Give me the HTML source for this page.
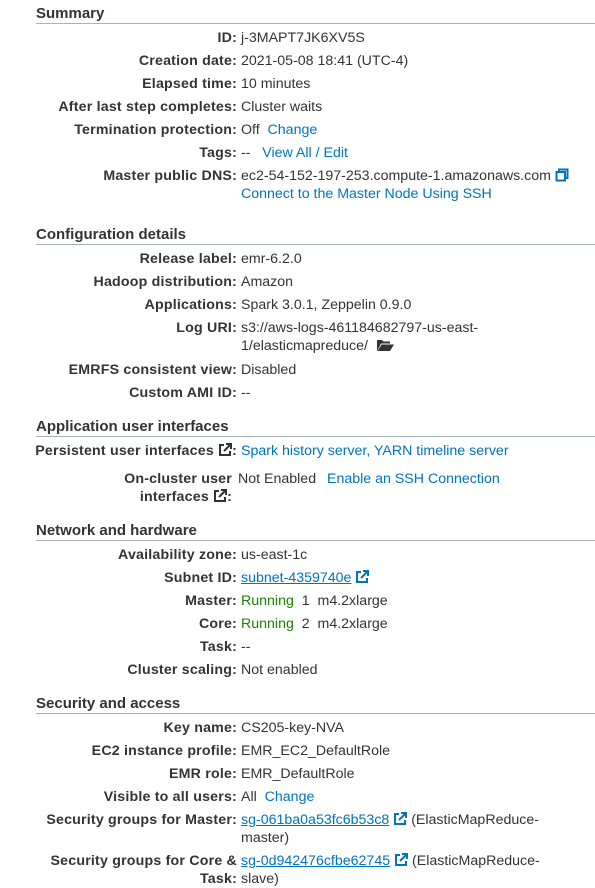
<!DOCTYPE html>
<html><head><meta charset="utf-8"><style>
body{margin:0;width:595px;height:888px;background:#fff;font-family:"Liberation Sans",Arial,sans-serif;font-size:14.2px;color:#222;position:relative;overflow:hidden}
.h{position:absolute;left:36px;right:0;font-weight:bold;font-size:15px;color:#333;line-height:18px;border-bottom:1px solid #aab0b4;padding-bottom:0px}
.r{position:absolute;left:0;right:0;line-height:18px;margin-top:1px}
.l{position:absolute;right:358px;text-align:right;font-weight:bold;color:#333;white-space:nowrap;letter-spacing:0.2px}
.v{position:absolute;left:241px;white-space:nowrap;color:#333}
a{color:#0073bb;text-decoration:none}
a.u{text-decoration:underline}
.g{color:#1d8102}
.ic{display:inline-block;vertical-align:-2px}
</style></head><body>
<div class="h" style="top:5px">Summary</div>
<div class="r" style="top:28px"><span class="l">ID:</span><span class="v">j-3MAPT7JK6XV5S</span></div>
<div class="r" style="top:51px"><span class="l">Creation date:</span><span class="v">2021-05-08 18:41 (UTC-4)</span></div>
<div class="r" style="top:74px"><span class="l">Elapsed time:</span><span class="v">10 minutes</span></div>
<div class="r" style="top:97px"><span class="l">After last step completes:</span><span class="v">Cluster waits</span></div>
<div class="r" style="top:120px"><span class="l">Termination protection:</span><span class="v">Off &nbsp;<a>Change</a></span></div>
<div class="r" style="top:143px"><span class="l">Tags:</span><span class="v">-- &nbsp; <a>View All / Edit</a></span></div>
<div class="r" style="top:166px"><span class="l">Master public DNS:</span><span class="v">ec2-54-152-197-253.compute-1.amazonaws.com <svg class="ic" width="14" height="14" viewBox="0 0 14 14"><rect x="4" y="1.5" width="8.5" height="8.5" fill="none" stroke="#0073bb" stroke-width="2"/><rect x="1.5" y="4" width="8.5" height="8.5" fill="#fff" stroke="#0073bb" stroke-width="2"/></svg><br><a>Connect to the Master Node Using SSH</a></span></div>

<div class="h" style="top:226px">Configuration details</div>
<div class="r" style="top:249px"><span class="l">Release label:</span><span class="v">emr-6.2.0</span></div>
<div class="r" style="top:272px"><span class="l">Hadoop distribution:</span><span class="v">Amazon</span></div>
<div class="r" style="top:295px"><span class="l">Applications:</span><span class="v">Spark 3.0.1, Zeppelin 0.9.0</span></div>
<div class="r" style="top:318px"><span class="l">Log URI:</span><span class="v">s3://aws-logs-461184682797-us-east-<br>1/elasticmapreduce/ &nbsp;<svg class="ic" width="18" height="13" viewBox="0 0 18 13"><path d="M1 1h5l1.5 1.5H14v2H5L1 12z" fill="#333"/><path d="M5.5 5.5H18L14 12H1.5z" fill="#333"/></svg></span></div>
<div class="r" style="top:360px"><span class="l">EMRFS consistent view:</span><span class="v">Disabled</span></div>
<div class="r" style="top:383px"><span class="l">Custom AMI ID:</span><span class="v">--</span></div>

<div class="h" style="top:418px">Application user interfaces</div>
<div class="r" style="top:441px"><span class="l">Persistent user interfaces <svg class="ic" width="14" height="14" viewBox="0 0 14 14"><path d="M6 2H2v10h10V8" fill="none" stroke="#333" stroke-width="2"/><path d="M8 1h5v5M13 1L6 8" fill="none" stroke="#333" stroke-width="2"/></svg>:</span><span class="v"><a>Spark history server, YARN timeline server</a></span></div>
<div class="r" style="top:469px"><span class="l" style="right:363px">On-cluster user<br>interfaces <svg class="ic" width="14" height="14" viewBox="0 0 14 14"><path d="M6 2H2v10h10V8" fill="none" stroke="#333" stroke-width="2"/><path d="M8 1h5v5M13 1L6 8" fill="none" stroke="#333" stroke-width="2"/></svg>:</span><span class="v" style="left:238px">Not Enabled</span><span class="v" style="left:327px"><a>Enable an SSH Connection</a></span></div>

<div class="h" style="top:522px">Network and hardware</div>
<div class="r" style="top:545px"><span class="l">Availability zone:</span><span class="v">us-east-1c</span></div>
<div class="r" style="top:568px"><span class="l">Subnet ID:</span><span class="v"><a class="u">subnet-4359740e</a> <svg class="ic" width="14" height="14" viewBox="0 0 14 14"><path d="M6 2H2v10h10V8" fill="none" stroke="#0073bb" stroke-width="2"/><path d="M8 1h5v5M13 1L6 8" fill="none" stroke="#0073bb" stroke-width="2"/></svg></span></div>
<div class="r" style="top:591px"><span class="l">Master:</span><span class="v"><span class="g">Running</span>&nbsp; 1&nbsp; m4.2xlarge</span></div>
<div class="r" style="top:614px"><span class="l">Core:</span><span class="v"><span class="g">Running</span>&nbsp; 2&nbsp; m4.2xlarge</span></div>
<div class="r" style="top:637px"><span class="l">Task:</span><span class="v">--</span></div>
<div class="r" style="top:660px"><span class="l">Cluster scaling:</span><span class="v">Not enabled</span></div>

<div class="h" style="top:695px">Security and access</div>
<div class="r" style="top:718px"><span class="l">Key name:</span><span class="v">CS205-key-NVA</span></div>
<div class="r" style="top:741px"><span class="l">EC2 instance profile:</span><span class="v">EMR_EC2_DefaultRole</span></div>
<div class="r" style="top:764px"><span class="l">EMR role:</span><span class="v">EMR_DefaultRole</span></div>
<div class="r" style="top:787px"><span class="l">Visible to all users:</span><span class="v">All &nbsp;<a>Change</a></span></div>
<div class="r" style="top:810px"><span class="l">Security groups for Master:</span><span class="v"><a class="u">sg-061ba0a53fc6b53c8</a> <svg class="ic" width="14" height="14" viewBox="0 0 14 14"><path d="M6 2H2v10h10V8" fill="none" stroke="#0073bb" stroke-width="2"/><path d="M8 1h5v5M13 1L6 8" fill="none" stroke="#0073bb" stroke-width="2"/></svg> (ElasticMapReduce-<br>master)</span></div>
<div class="r" style="top:851px"><span class="l">Security groups for Core &amp;<br>Task:</span><span class="v"><a class="u">sg-0d942476cfbe62745</a> <svg class="ic" width="14" height="14" viewBox="0 0 14 14"><path d="M6 2H2v10h10V8" fill="none" stroke="#0073bb" stroke-width="2"/><path d="M8 1h5v5M13 1L6 8" fill="none" stroke="#0073bb" stroke-width="2"/></svg> (ElasticMapReduce-<br>slave)</span></div>
</body></html>
